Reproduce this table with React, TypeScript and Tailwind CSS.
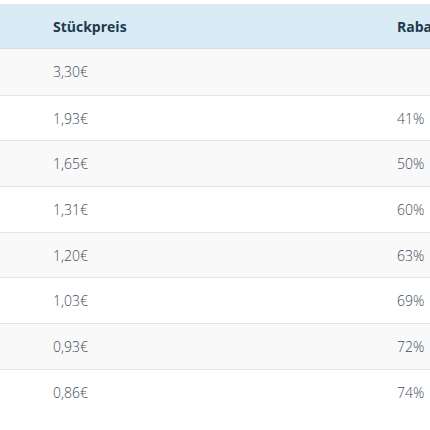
const rows = [
  { price: "3,30€", discount: "" },
  { price: "1,93€", discount: "41%" },
  { price: "1,65€", discount: "50%" },
  { price: "1,31€", discount: "60%" },
  { price: "1,20€", discount: "63%" },
  { price: "1,03€", discount: "69%" },
  { price: "0,93€", discount: "72%" },
  { price: "0,86€", discount: "74%" },
];

const App = () => {
  return (
    <div className="w-[430px] h-[430px] overflow-hidden bg-white pt-1 font-['Segoe_UI','Open_Sans',sans-serif] text-[14px]">
      <div className="w-[520px]">
        <div className="grid grid-cols-[397px_1fr] h-[45px] items-center bg-[#d9ebf5] border-b border-[#cfdde6] font-bold text-[#1e3a4c]">
          <div className="pl-[53px]">Stückpreis</div>
          <div>Rabatt</div>
        </div>
        {rows.map((row, i) => (
          <div
            key={row.price}
            className={`grid grid-cols-[397px_1fr] h-[45.7px] items-center font-light text-[#3e4d59] ${
              i > 0 ? "border-t border-[#e3e3e3]" : ""
            } ${i % 2 === 0 ? "bg-[#f9f9f9]" : "bg-white"}`}
          >
            <div className="pl-[53px]">{row.price}</div>
            <div>{row.discount}</div>
          </div>
        ))}
      </div>
    </div>
  );
};

export default App;
